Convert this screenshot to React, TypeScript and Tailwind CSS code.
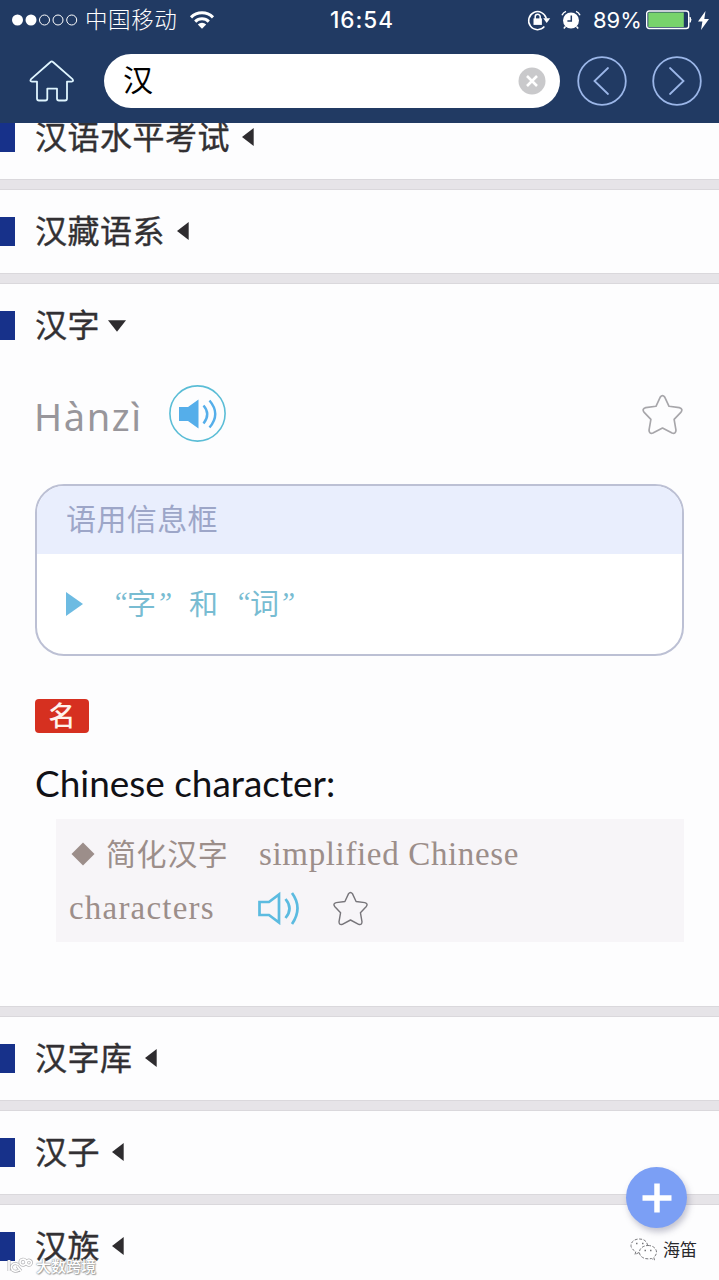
import React from "react";

const CJK = "font-['Noto_Sans_CJK_SC',sans-serif]";

function Arrow({ open }: { open?: boolean }) {
  return open ? (
    <svg className="ml-[8px] h-[12px] w-[18px]" viewBox="0 0 18 12">
      <path d="M0 .3h18L9 11.8z" fill="#2e2c2f" />
    </svg>
  ) : (
    <svg className="mb-px ml-[12px] h-[18px] w-[12px]" viewBox="0 0 12 18">
      <path d="M11.7 0v18L0 9z" fill="#2e2c2f" />
    </svg>
  );
}

function Title({ text, open }: { text: string; open?: boolean }) {
  return (
    <div className="flex h-[83px] shrink-0 items-center">
      <div className="h-[29px] w-[15px] bg-[#17318a]" />
      <h2 className={`${CJK} ml-5 pb-[6px] text-[32px] leading-[40px] tracking-[0.5px] text-[#323033] [-webkit-text-stroke:0.4px_#323033]`}>{text}</h2>
      <Arrow open={open} />
    </div>
  );
}

function Divider() {
  return <div className="h-[11px] shrink-0 border-y border-[#dad8dc] bg-[#e6e4e8]" />;
}

function Star({ className }: { className: string }) {
  return (
    <svg className={className} viewBox="0 0 42 42" fill="none" stroke="currentColor" strokeWidth="1.7" strokeLinejoin="round">
      <path d="M18.7 3.2Q21 .2 23.300 3.2L27.700 12.600 38.2 14Q42.3 15.2 40 18.500L32.900 26 34.800 37Q34.700 41.200 30.800 40L21 34.800 11.2 40Q7.300 41.200 7.200 37L9.100 26 2 18.500Q-.3 15.2 3.800 14L14.300 12.600Z" />
    </svg>
  );
}

function StatusBar() {
  return (
    <div className="flex h-[40px] items-center text-white">
      <svg className="ml-[12px] h-[12px] w-[66px]" viewBox="0 0 66 12" fill="none" stroke="#fff">
        <circle cx="5.5" cy="6" r="5.5" fill="#fff" stroke="none" />
        <circle cx="19" cy="6" r="5.5" fill="#fff" stroke="none" />
        <circle cx="32.5" cy="6" r="5" />
        <circle cx="46" cy="6" r="5" />
        <circle cx="59.7" cy="6" r="5" />
      </svg>
      <span className={`${CJK} ml-[7px] w-[94px] pb-[4px] text-[22.5px] leading-[30px] font-light tracking-[0.6px] whitespace-nowrap`}>中国移动</span>
      <svg className="ml-[10px] h-[18px] w-[26px]" viewBox="0 0 26 18" fill="none" stroke="#fff" strokeWidth="3">
        <path d="M2 6.4a15.6 15.6 0 0 1 22 0M6.2 10.6a9.7 9.7 0 0 1 13.6 0" />
        <path d="M8.8 13.4a6 6 0 0 1 8.4 0L13 17.8z" fill="#fff" stroke="none" />
      </svg>
      <span className="ml-[115px] w-[70px] font-[Inter,sans-serif] text-[22.5px] leading-[30px] font-medium tracking-[1px] whitespace-nowrap">16:54</span>
      <svg className="ml-[127px] h-[22px] w-[24px]" viewBox="0 0 24 22" fill="none" stroke="#fff" strokeWidth="1.5">
        <path d="M17.4 17.6A9 9 0 1 1 19.4 9.6" />
        <path d="M16.2 9.3h7L19.7 14z" fill="#fff" stroke="none" />
        <rect x="6.5" y="9.4" width="8.4" height="6.5" fill="#fff" stroke="none" />
        <path d="M8.2 10V7.8a2.5 2.5 0 0 1 5 0V10" />
      </svg>
      <svg className="ml-[10px] h-[20px] w-[20px]" viewBox="0 0 20 20" fill="none" stroke="#fff" strokeWidth="1.5">
        <circle cx="10" cy="10.5" r="8" fill="#fff" stroke="none" />
        <path d="M1 5.2A7 7 0 0 1 5 1.4M19 5.2a7 7 0 0 0-4-3.8M4.5 16.5l-1.7 2M15.5 16.5l1.7 2" />
        <path d="M10.3 5.5v5.4H6.4" stroke="#213a63" />
      </svg>
      <span className="ml-[12px] w-[51px] font-[Inter,sans-serif] text-[22px] leading-[30px] whitespace-nowrap">89%</span>
      <svg className="ml-[2px] h-[20px] w-[46px]" viewBox="0 0 46 20" fill="none" stroke="#fff">
        <rect x="0.7" y="1" width="42" height="17.5" rx="2.5" strokeWidth="1.4" />
        <rect x="2.3" y="2.5" width="35.5" height="14.5" fill="#78d36c" stroke="none" />
        <path d="M44 7.200q2 2.500 0 5.200z" fill="#fff" />
      </svg>
      <svg className="ml-[6px] h-[19px] w-[11px]" viewBox="0 0 11 19">
        <path d="M7.5 0L0 10.5h4.4L3 19l8-11H6.3z" fill="#fff" />
      </svg>
    </div>
  );
}

function NavButton({ d }: { d: string }) {
  return (
    <svg className="h-[50px] w-[50px] shrink-0" viewBox="0 0 50 50" fill="none" stroke="#9bb6e8" strokeWidth="1.8" strokeLinecap="round">
      <circle cx="25" cy="25" r="23.8" />
      <path d={d} />
    </svg>
  );
}

function Header() {
  return (
    <header className="relative z-10 h-[123px] shrink-0 bg-[#213a63]">
      <StatusBar />
      <div className="flex h-[82px] items-center">
        <svg className="ml-[29px] h-[42px] w-[46px] shrink-0" viewBox="0 0 46 42" fill="none" stroke="#dff5ff" strokeWidth="1.8" strokeLinejoin="round">
          <path d="M21.5 2Q22.7.8 24 2L43.5 19.2Q45 21.2 42.5 21.6H38V38.5Q38 40.5 36 40.5H30Q28 40.5 28 38.5V28.7H18.3V38.5Q18.3 40.5 16.3 40.5H10Q8 40.5 8 38.5V21.6H3Q.5 21.2 2 19.2Z" />
        </svg>
        <div className="ml-[29px] flex h-[54px] w-[456px] shrink-0 items-center rounded-full bg-white pr-[14px] pl-[19px]">
          <span className={`${CJK} -mt-[6px] flex-1 text-[30px] leading-[40px] text-black`}>汉</span>
          <svg className="h-[28px] w-[28px]" viewBox="0 0 28 28">
            <circle cx="14" cy="14" r="13.5" fill="#c9c9cb" />
            <path d="M9 9l10 10M19 9L9 19" stroke="#fff" strokeWidth="2.6" />
          </svg>
        </div>
        <div className="ml-[17px] flex gap-[25px]">
          <NavButton d="M31 12L17.5 25 31 38" />
          <NavButton d="M18 12L31.500 25 18 38" />
        </div>
      </div>
    </header>
  );
}

function Quote({ children }: { children: string }) {
  return <i className="w-[15px] text-center font-['Liberation_Serif',serif] text-[29px] leading-[30px] whitespace-nowrap">{children}</i>;
}

function InfoBox() {
  return (
    <section className="mx-[35px] mt-[42px] h-[172px] shrink-0 overflow-hidden rounded-[29px] border-2 border-[#bcc0d4] bg-white">
      <div className="flex h-[68px] items-center bg-[#e9eefd] pb-[7px] pl-[29px]">
        <span className={`${CJK} text-[30px] leading-[40px] tracking-[0.4px] text-[#9da6c8]`}>语用信息框</span>
      </div>
      <div className="flex h-[100px] items-center pl-[29px] text-[#78bcd2]">
        <svg className="h-[24px] w-[17px]" viewBox="0 0 17 24">
          <path d="M0 0l17 12L0 24z" fill="#6dbbe2" />
        </svg>
        <div className={`${CJK} ml-[29px] flex items-center pb-[4px] text-[29px] leading-[40px] whitespace-nowrap`}>
          <span className="flex w-[77px] items-center"><Quote>“</Quote><span className="w-[29px]">字</span><Quote>”</Quote></span>
          <span className="w-[46px]">和</span>
          <span className="flex items-center"><Quote>“</Quote><span className="w-[29px]">词</span><Quote>”</Quote></span>
        </div>
      </div>
    </section>
  );
}

function Entry() {
  return (
    <article className="flex h-[722px] shrink-0 flex-col">
      <Title text="汉字" open />
      <div className="mt-[18px] flex h-[57px] shrink-0 items-center pr-[36px] pl-[34px]">
        <span className="w-[135px] pt-[4px] font-['Noto_Sans',sans-serif] text-[38px] leading-[50px] tracking-[1.6px] text-[#98969b]">Hànzì</span>
        <svg className="h-[57px] w-[57px]" viewBox="0 0 57 57" fill="none">
          <circle cx="28.5" cy="28.5" r="27.6" stroke="#5bbdd6" strokeWidth="1.6" />
          <path d="M10 22h9l10.5-7.500v29L19 36h-9z" fill="#55aeea" />
          <path d="M34.500 20.500q7.500 8.500 0 18M40.500 15.500q11.500 13.500 0 27" stroke="#55aeea" strokeWidth="2.4" />
        </svg>
        <Star className="mt-px ml-auto h-[41px] w-[41px] text-[#a7a6aa]" />
      </div>
      <InfoBox />
      <div className="mt-[43px] ml-[35px] flex h-[34px] w-[54px] shrink-0 items-center justify-center rounded-[4px] bg-[#d63020] pb-[2px]">
        <span className={`${CJK} text-[27px] leading-[34px] font-medium text-[#fff3ed]`}>名</span>
      </div>
      <p className="mt-[26px] ml-[35px] h-[48px] shrink-0 font-[Lato,sans-serif] text-[37.5px] leading-[48px] text-[#111116]">
        <span className="inline-block origin-left scale-x-[0.985] whitespace-nowrap">Chinese character:</span>
      </p>
      <div className="mt-[12px] mr-[35px] ml-[56px] h-[123px] shrink-0 bg-[#f7f5f8] pt-[8px] pl-[13px] font-['Liberation_Serif',serif] text-[33px] text-[#9c8e8a]">
        <div className="flex h-[54px] items-center">
          <svg className="ml-[2px] h-[24px] w-[24px]" viewBox="0 0 24 24">
            <path d="M12 .5L23.500 12 12 23.500.5 12z" fill="#9c8e8a" />
          </svg>
          <span className={`${CJK} ml-[11px] w-[153px] pb-[4px] text-[30px] leading-[40px] tracking-[0.6px]`}>简化汉字</span>
          <span className="pt-[2px] tracking-[0.65px] whitespace-nowrap">simplified Chinese</span>
        </div>
        <div className="flex h-[54px] items-center">
          <span className="w-[188px] pt-[2px] tracking-[1.2px]">characters</span>
          <svg className="h-[34px] w-[43px]" viewBox="0 0 43 34" fill="none" stroke="#5cbbe0" strokeWidth="2.7">
            <path d="M2.500 11h9.500L22 3.500v28L12 24H2.500z" />
            <path d="M28.500 8q8 9.500 0 19M35 2q11 15 0 31" />
          </svg>
          <Star className="ml-[33px] h-[35px] w-[35px] text-[#77757a]" />
        </div>
      </div>
    </article>
  );
}

export default function App() {
  return (
    <main className="relative flex h-[1280px] w-[719px] flex-col overflow-hidden bg-[#fdfdfe]">
      <Header />
      <div className="-mt-[27px] flex flex-col">
        <Title text="汉语水平考试" />
        <Divider />
        <Title text="汉藏语系" />
        <Divider />
        <Entry />
        <Divider />
        <Title text="汉字库" />
        <Divider />
        <Title text="汉子" />
        <Divider />
        <Title text="汉族" />
      </div>

      <button aria-label="+" className="absolute top-[1167px] left-[626px] flex h-[61px] w-[61px] items-center justify-center rounded-full bg-[#7b9ff5] shadow-[2px_4px_6px_rgba(90,90,120,0.35)]">
        <svg className="h-[30px] w-[30px]" viewBox="0 0 30 30" stroke="#fff" strokeWidth="5.500">
          <path d="M15 .5v29M.5 15h29" />
        </svg>
      </button>
      <div className="absolute top-[1237px] left-[630px] flex items-center">
        <svg className="h-[24px] w-[28px]" viewBox="0 0 28 24" fill="#fff" stroke="#77777b" strokeWidth="1" strokeDasharray="3 1.5">
          <path d="M9 14.500l-4 2 .8-3Q1 11 1 7.500C1 3.500 5 1 9.500 1S17 3.500 17.500 7" />
          <path d="M18 7.500c5 0 8.500 3 8.500 6.700 0 2-1.200 3.800-2.700 5l.6 2.800-3-1.500c-7 1.600-12-2-12-6.300 0-3.700 3.800-6.700 8.600-6.700z" />
          <path d="M6 5.500h1.500M12 5.500h1.500M14.500 12.500h1.500M20 12.500h1.500" strokeDasharray="none" strokeWidth="1.500" />
        </svg>
        <span className={`${CJK} ml-[5px] pb-[2px] text-[17px] leading-[24px] text-[#29292d]`}>海笛</span>
      </div>
      <div className="absolute top-[1256px] left-[7px] flex items-center">
        <svg className="h-[18px] w-[26px]" viewBox="0 0 26 18" fill="none">
          <path d="M2 3v11M11 7.500C7 5 4 8 4.500 11S9 15.500 12 13M10 9l4 5M13 5a3 3 0 1 1 4 3 3 3 0 0 1-4-3M20 4a2.500 2.500 0 1 1 1 4 2.500 2.500 0 0 1-1-4" stroke="#b5b5b8" strokeWidth="3" />
          <path d="M2 3v11M11 7.500C7 5 4 8 4.500 11S9 15.500 12 13M10 9l4 5M13 5a3 3 0 1 1 4 3 3 3 0 0 1-4-3M20 4a2.500 2.500 0 1 1 1 4 2.500 2.500 0 0 1-1-4" stroke="#fff" strokeWidth="1.600" />
        </svg>
        <span className={`${CJK} ml-[3px] text-[15px] leading-[20px] font-medium text-white [text-shadow:0_0_1px_#888,0_0_2px_#999,1px_1px_1px_#aaa]`}>大数跨境</span>
      </div>
    </main>
  );
}
